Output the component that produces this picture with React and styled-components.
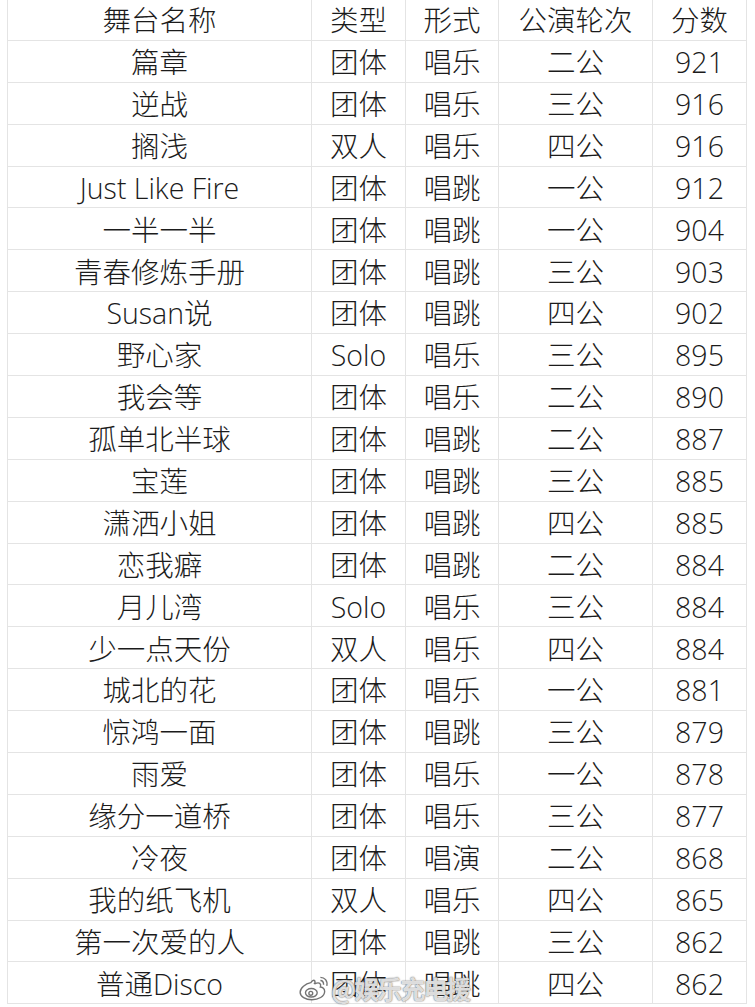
import React from "react";
import styled, { createGlobalStyle } from "styled-components";

const Global = createGlobalStyle`
  html, body { margin: 0; padding: 0; background: #ffffff; }
  body { width: 755px; height: 1007px; overflow: hidden; }
`;

const Page = styled.div`
  position: relative;
  width: 755px;
  height: 1007px;
  overflow: hidden;
  background: #fff;
  padding-left: 7px;
  box-sizing: border-box;
`;

const Sheet = styled.div`
  display: grid;
  grid-template-columns: 304px 94px 93px 154px 94px;
  grid-auto-rows: 41.9px;
  border-left: 1px solid #e4e4e4;
  margin-top: -1px;
  font-family: "Open Sans", "Noto Sans CJK SC", sans-serif;
  font-weight: 300;
  color: #1b1b1b;
`;

const Cell = styled.div`
  box-sizing: border-box;
  border-right: 1px solid #e4e4e4;
  border-bottom: 1px solid #e4e4e4;
  display: flex;
  align-items: center;
  justify-content: center;
  font-size: 28.5px;
  line-height: 1;
  white-space: nowrap;
  padding-top: ${(p) => (p.$head ? "1px" : "2px")};
`;

const Watermark = styled.div`
  position: absolute;
  left: 298px;
  top: 970px;
  display: flex;
  align-items: center;
  gap: 1px;
  font-family: "Noto Sans CJK SC", sans-serif;
  font-size: 25px;
  font-weight: 700;
  color: rgba(255, 255, 255, 0.8);
  text-shadow: 0 0 1px rgba(90, 90, 90, 0.9), 0 0 2px rgba(90, 90, 90, 0.6);
  letter-spacing: -2px;
`;

const rows = [
  ["篇章", "团体", "唱乐", "二公", "921"],
  ["逆战", "团体", "唱乐", "三公", "916"],
  ["搁浅", "双人", "唱乐", "四公", "916"],
  ["Just Like Fire", "团体", "唱跳", "一公", "912"],
  ["一半一半", "团体", "唱跳", "一公", "904"],
  ["青春修炼手册", "团体", "唱跳", "三公", "903"],
  ["Susan说", "团体", "唱跳", "四公", "902"],
  ["野心家", "Solo", "唱乐", "三公", "895"],
  ["我会等", "团体", "唱乐", "二公", "890"],
  ["孤单北半球", "团体", "唱跳", "二公", "887"],
  ["宝莲", "团体", "唱跳", "三公", "885"],
  ["潇洒小姐", "团体", "唱跳", "四公", "885"],
  ["恋我癖", "团体", "唱跳", "二公", "884"],
  ["月儿湾", "Solo", "唱乐", "三公", "884"],
  ["少一点天份", "双人", "唱乐", "四公", "884"],
  ["城北的花", "团体", "唱乐", "一公", "881"],
  ["惊鸿一面", "团体", "唱跳", "三公", "879"],
  ["雨爱", "团体", "唱乐", "一公", "878"],
  ["缘分一道桥", "团体", "唱乐", "三公", "877"],
  ["冷夜", "团体", "唱演", "二公", "868"],
  ["我的纸飞机", "双人", "唱乐", "四公", "865"],
  ["第一次爱的人", "团体", "唱跳", "三公", "862"],
  ["普通Disco", "团体", "唱跳", "四公", "862"],
];

const header = ["舞台名称", "类型", "形式", "公演轮次", "分数"];

function WeiboLogo() {
  return (
    <svg width="32" height="26" viewBox="0 0 30 24">
      <g fill="rgba(255,255,255,0.85)" stroke="rgba(90,90,90,0.85)" strokeWidth="1.3">
        <path d="M12 7c-5 1-10 5-10 9 0 4 5 7 11 7s12-3 12-8c0-3-3-4-4-4 1-3-1-5-5-3-1 0-1 0 0-1 0-3-2-3-4 0z" />
        <ellipse cx="12.5" cy="16.5" rx="5.5" ry="4" />
        <circle cx="12" cy="17" r="1.8" />
        <path d="M21 2c4 0 7 3 6 8" fill="none" />
        <path d="M21 5c2 0 3 2 3 4" fill="none" />
      </g>
    </svg>
  );
}

export default function App() {
  return (
    <Page>
      <Global />
      <Sheet>
        {header.map((h, i) => (
          <Cell key={"h" + i} $head>
            {h}
          </Cell>
        ))}
        {rows.map((r, ri) =>
          r.map((c, ci) => <Cell key={ri + "-" + ci}>{c}</Cell>)
        )}
      </Sheet>
      <Watermark>
        <WeiboLogo />
        <span>@娱乐充电援</span>
      </Watermark>
    </Page>
  );
}
